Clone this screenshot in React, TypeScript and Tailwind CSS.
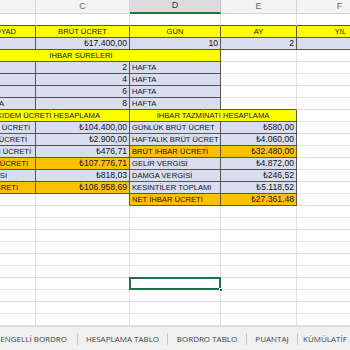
import type { ReactNode } from "react";

const Y = "bg-[#ffff00]";
const B = "bg-[#d8def0]";
const O = "bg-[#ffc000]";
const W = "bg-white";

type CellProps = {
  w: string;
  bg?: string;
  rd?: boolean;
  bd?: boolean;
  align?: "l" | "c" | "r";
  pad?: string;
  children?: ReactNode;
};

function Cell({ w, bg = W, rd, bd, align = "l", pad = "", children }: CellProps) {
  const colored = bg !== W;
  const right = colored || rd ? "border-r-[#555]" : "border-r-[#e1e1e1]";
  const bottom = colored || bd ? "border-b-[#555]" : "border-b-[#e1e1e1]";
  const just = align === "c" ? "justify-center" : align === "r" ? "justify-end" : "justify-start";
  return (
    <div
      className={`${w} ${bg} ${right} ${bottom} h-full shrink-0 border-r border-b flex items-center overflow-hidden whitespace-nowrap ${just} ${pad}`}
    >
      {children}
    </div>
  );
}

function Row({ children }: { children: ReactNode }) {
  return <div className="flex h-[12px]">{children}</div>;
}

// money values render a touch wider than labels in the sheet
function Num({ children }: { children: ReactNode }) {
  return <span className="text-[8.6px]">{children}</span>;
}

const wB = "w-[36px]";
const wC = "w-[94px]";
const wD = "w-[91px]";
const wE = "w-[76px]";
const wF = "w-[86px]";
const wBC = "w-[130px]";
const wDE = "w-[167px]";

function EmptyRow({ bdTop }: { bdTop?: boolean }) {
  return (
    <Row>
      <Cell w={wB} bd={bdTop} />
      <Cell w={wC} bd={bdTop} />
      <Cell w={wD} bd={bdTop} />
      <Cell w={wE} bd={bdTop} />
      <Cell w={wF} bd={bdTop} />
    </Row>
  );
}

const sureler = [2, 4, 6, 8];

const kidem = [
  { label: "BRÜT KIDEM ÜCRETİ", pr: "pr-[5px]", val: "₺104.400,00", bg: B, r: "GÜNLÜK BRÜT ÜCRET", rv: "₺580,00", rbg: B },
  { label: "AYLIK ÜCRETİ", pr: "pr-[8px]", val: "₺2.900,00", bg: B, r: "HAFTALIK BRÜT ÜCRET", rv: "₺4.060,00", rbg: B },
  { label: "GÜNLÜK KIDEM ÜCRETİ", pr: "pr-[4px]", val: "₺476,71", bg: B, r: "BRÜT İHBAR ÜCRETİ", rv: "₺32.480,00", rbg: O },
  { label: "TOPLAM ÜCRETİ", pr: "pr-[7px]", val: "₺107.776,71", bg: O, r: "GELİR VERGİSİ", rv: "₺4.872,00", rbg: B },
  { label: "DAMGA VERGİSİ", pr: "pr-[28px]", val: "₺818,03", bg: B, r: "DAMGA VERGİSİ", rv: "₺246,52", rbg: B },
  { label: "NET KIDEM ÜCRETİ", pr: "pr-[17px]", val: "₺106.958,69", bg: O, r: "KESİNTİLER TOPLAMI", rv: "₺5.118,52", rbg: B },
];

const tabs = [
  { t: "ENGELLİ BORDRO", w: "w-[78px]" },
  { t: "HESAPLAMA TABLO", w: "w-[90px]" },
  { t: "BORDRO TABLO", w: "w-[79px]" },
  { t: "PUANTAJ", w: "w-[51px]" },
  { t: "KÜMÜLATİF", w: "w-[80px]" },
];

export default function App() {
  return (
    <div className="w-[350px] h-[350px] overflow-hidden bg-white flex flex-col font-['Liberation_Sans',Arial,sans-serif] text-[7.6px] text-[#141414]">
      {/* column headers */}
      <div className="flex h-[14px] shrink-0 bg-[#f3f3f3] text-[9px] text-[#666]">
        <div className="w-[36px] shrink-0 border-r border-b border-[#d4d4d4]" />
        <div className="w-[94px] shrink-0 border-r border-b border-[#d4d4d4] flex items-center justify-center">C</div>
        <div className="w-[91px] shrink-0 bg-[#dcdcdc] border-r border-[#c6c6c6] border-b-2 border-b-[#217346] flex items-center justify-center text-[#333]">D</div>
        <div className="w-[76px] shrink-0 border-r border-b border-[#d4d4d4] flex items-center justify-center">E</div>
        <div className="w-[86px] shrink-0 border-r border-b border-[#d4d4d4] flex items-center justify-center">F</div>
      </div>

      <div className="flex-1 overflow-hidden">
        <EmptyRow bdTop />
        <Row>
          <Cell w={wB} bg={Y} align="r" pad="pr-[19px]">AD SOYAD</Cell>
          <Cell w={wC} bg={Y} align="c">BRÜT ÜCRET</Cell>
          <Cell w={wD} bg={Y} align="c">GÜN</Cell>
          <Cell w={wE} bg={Y} align="c">AY</Cell>
          <Cell w={wF} bg={Y} align="c" pad="pl-[2px]">YIL</Cell>
        </Row>
        <Row>
          <Cell w={wB} bg={B} />
          <Cell w={wC} bg={B} align="r" pad="pr-[2px]"><Num>₺17.400,00</Num></Cell>
          <Cell w={wD} bg={B} align="r" pad="pr-[2px]"><Num>10</Num></Cell>
          <Cell w={wE} bg={B} align="r" pad="pr-[2px]"><Num>2</Num></Cell>
          <Cell w={wF} bg={B} />
        </Row>
        <Row>
          <Cell w="w-[221px]" bg={Y}>
            <span className="w-[162px] text-center">İHBAR SÜRELERİ</span>
          </Cell>
          <Cell w={wE} />
          <Cell w={wF} />
        </Row>
        {sureler.map((n, i) => (
          <Row key={n}>
            <Cell w={wB} bg={B} align="r" pad="pr-[31px]">{i === 3 ? "3 YILDAN FAZLA" : ""}</Cell>
            <Cell w={wC} bg={B} align="r" pad="pr-[2px]"><Num>{n}</Num></Cell>
            <Cell w={wD} bg={B} pad="pl-[2px]">HAFTA</Cell>
            <Cell w={wE} bd={i === 3} />
            <Cell w={wF} />
          </Row>
        ))}
        <Row>
          <Cell w={wBC} bg={Y} align="r" pad="pr-[29px]">KIDEM ÜCRETİ HESAPLAMA</Cell>
          <Cell w={wDE} bg={Y} align="c">İHBAR TAZMİNATI HESAPLAMA</Cell>
          <Cell w={wF} />
        </Row>
        {kidem.map((k) => (
          <Row key={k.r}>
            <Cell w={wB} bg={k.bg} align="r" pad={k.pr}>{k.label}</Cell>
            <Cell w={wC} bg={k.bg} align="r" pad="pr-[2px]"><Num>{k.val}</Num></Cell>
            <Cell w={wD} bg={k.rbg} pad="pl-[2px]">{k.r}</Cell>
            <Cell w={wE} bg={k.rbg} align="r" pad="pr-[2px]"><Num>{k.rv}</Num></Cell>
            <Cell w={wF} />
          </Row>
        ))}
        <Row>
          <Cell w={wB} />
          <Cell w={wC} rd />
          <Cell w={wD} bg={O} pad="pl-[2px]">NET İHBAR ÜCRETİ</Cell>
          <Cell w={wE} bg={O} align="r" pad="pr-[2px]"><Num>₺27.361,48</Num></Cell>
          <Cell w={wF} />
        </Row>
        {[0, 1, 2, 3, 4, 5].map((i) => (
          <EmptyRow key={i} />
        ))}
        <Row>
          <Cell w={wB} />
          <Cell w={wC} />
          <div className="w-[91px] h-full shrink-0 relative border-r border-b border-[#e1e1e1]">
            <div className="absolute -left-[1px] -top-[1px] w-[92px] h-[13px] border-2 border-[#217346]" />
            <div className="absolute -right-[3px] -bottom-[3px] w-[4px] h-[4px] bg-[#217346] border border-white" />
          </div>
          <Cell w={wE} />
          <Cell w={wF} />
        </Row>
        {[0, 1, 2].map((i) => (
          <EmptyRow key={i} />
        ))}
      </div>

      {/* sheet tabs */}
      <div className="h-[24px] shrink-0 bg-[#f0f0f0] border-t border-[#dadada] flex items-center text-[8px] text-[#444] font-['Open_Sans',sans-serif] whitespace-nowrap overflow-hidden">
        {tabs.map((t, i) => (
          <div
            key={t.t}
            className={`${t.w} shrink-0 flex items-center h-[12px] ${i === 0 ? "justify-end pr-[10px]" : i === tabs.length - 1 ? "justify-start pl-[5px]" : "justify-center"} ${i < tabs.length - 1 ? "border-r border-[#c8c8c8]" : ""}`}
          >
            {t.t}
          </div>
        ))}
      </div>
    </div>
  );
}
